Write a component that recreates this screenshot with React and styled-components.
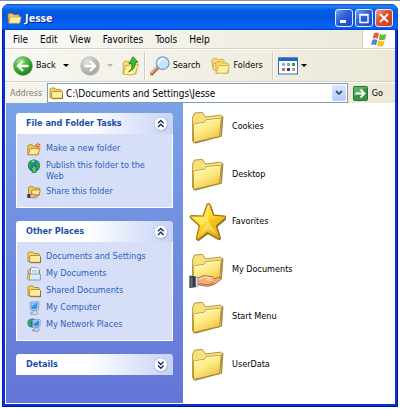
import React, { useState } from 'react'
import styled, { createGlobalStyle } from 'styled-components'

const GlobalStyle = createGlobalStyle`
  * {
    box-sizing: border-box;
  }

  body {
    margin: 0;
    background: #fff;
    font-family: 'DejaVu Sans Condensed', 'DejaVu Sans', sans-serif;
    font-stretch: condensed;
    font-size: 9px;
    line-height: 11px;
    color: #000;
  }

  button, input {
    margin: 0;
    padding: 0;
    border: 0;
    background: none;
    font: inherit;
    color: inherit;
  }

  svg {
    display: block;
    flex: none;
  }
`

const Desktop = styled.div`
  display: flex;
  min-height: 100vh;
  padding: 3px 2px 2px;
  border-top: 1px solid #8d8f9c;
`

const Window = styled.main`
  flex: 1;
  min-width: 0;
  display: flex;
  flex-direction: column;
  padding: 0 3px 3px;
  border-radius: 7px 7px 0 0;
  background: #0831d9;
  box-shadow: inset 1px 0 #0019cf, inset -1px -1px #00138c;
  overflow: hidden;
`

const TitleBar = styled.header`
  display: flex;
  align-items: center;
  height: 26px;
  margin: 0 -3px;
  padding: 2px 5px 0;
  background: linear-gradient(#0a4fc9, #2a83f5 8%, #0560e8 22%, #0453dd 50%, #0563f5 80%, #0560f0 92%, #003dd0);
`

const Title = styled.h1`
  flex: 1;
  margin: 0 0 0 3px;
  font-family: 'Open Sans', sans-serif;
  font-stretch: normal;
  font-size: 11px;
  line-height: 14px;
  color: #fff;
  text-shadow: 1px 1px #0a1883;
`

const TitleButtons = styled.div`
  display: flex;
  gap: 2px;
`

const TitleButton = styled.button`
  width: 18px;
  height: 18px;
  display: grid;
  place-items: center;
  border: 1px solid #dfe8fb;
  border-radius: 3px;
  background: ${props => props.$close
    ? 'linear-gradient(135deg, #f0a58c, #e0532c 40%, #c8381a)'
    : 'linear-gradient(135deg, #7ea4f2, #2f62dc 40%, #1b48c4)'};
`

const MenuBar = styled.nav`
  display: flex;
  align-items: stretch;
  height: 19px;
  padding-left: 8px;
  border-bottom: 1px solid #d8d2bd;
  background: linear-gradient(90deg, #f9f9f7, #ece9d8);
  font-size: 10px;
`

const MenuItems = styled.div`
  flex: 1;
  display: flex;
  align-items: center;
  gap: 12px;
`

const FlagBox = styled.div`
  width: 33px;
  display: grid;
  place-items: center;
  border-left: 1px solid #d8d2bd;
  background: #fff;
`

const ToolBar = styled.div`
  display: flex;
  align-items: center;
  height: 33px;
  padding-left: 8px;
  border-top: 1px solid #fff;
  border-bottom: 1px solid #d8d2bd;
  background: linear-gradient(90deg, #f7f6f1, #ece9d8);
`

const ToolButton = styled.button`
  display: flex;
  align-items: center;
  gap: 3px;
  margin-right: ${props => props.$after || 0}px;
`

const Caret = styled.span`
  margin-left: ${props => props.$wide ? 4 : 0}px;
  border: 3px solid transparent;
  border-top-color: ${props => props.$muted ? '#b5b2a6' : '#000'};
  border-bottom: 0;
`

const Divider = styled.span`
  width: 2px;
  height: 28px;
  margin-right: 4px;
  border-left: 1px solid #cfcab6;
  border-right: 1px solid #fff;
`

const AddressBar = styled.form`
  display: flex;
  align-items: center;
  height: 21px;
  padding: 0 12px 0 5px;
  border-top: 1px solid #fff;
  background: linear-gradient(90deg, #f5f4ee, #ece9d8);
`

const AddressLabel = styled.label`
  width: 37px;
  color: #7f7c73;
`

const AddressField = styled.div`
  flex: 1;
  min-width: 0;
  height: 20px;
  display: flex;
  align-items: center;
  gap: 3px;
  padding: 0 1px;
  border: 1px solid #7f9db9;
  background: #fff;
  font-size: 10px;
`

const AddressInput = styled.input`
  flex: 1;
  min-width: 0;
  outline: 0;
`

const DropButton = styled.button`
  width: 14px;
  height: 16px;
  display: grid;
  place-items: center;
  border-radius: 2px;
  background: linear-gradient(#dbe6fe, #b5cbf8);
`

const GoButton = styled.button`
  display: flex;
  align-items: center;
  gap: 4px;
  margin-left: 5px;
`

const Content = styled.div`
  flex: 1;
  display: flex;
  border-left: 1px solid #fff;
  border-bottom: 1px solid #fff;
  background: #fff;
`

const SideBar = styled.aside`
  width: 177px;
  display: flex;
  flex-direction: column;
  gap: 13px;
  padding: 10px 10px 20px;
  background: linear-gradient(#7ba2e7, #6375d6);
`

const PanelHeader = styled.button`
  width: 100%;
  height: 21px;
  display: flex;
  align-items: center;
  justify-content: space-between;
  padding: 0 4px 0 10px;
  border-radius: 3px 3px 0 0;
  background: linear-gradient(90deg, #fff 45%, #c6d3f7);
  font-weight: bold;
  color: #1c4ea8;
`

const PanelBody = styled.ul`
  display: flex;
  flex-direction: column;
  gap: 3px;
  margin: 0;
  padding: 8px 10px;
  border: 1px solid #fff;
  border-top: 0;
  background: #d6dff7;
  list-style: none;
`

const PanelLink = styled.a`
  display: grid;
  grid-template-columns: 14px 1fr;
  gap: 5px;
  color: #2a5fc0;
  text-decoration: none;
`

const LinkIcon = styled.span`
  height: 14px;
`

const LinkText = styled.span`
  padding-top: 1px;
`

const Files = styled.ul`
  flex: 1;
  display: grid;
  grid-template-rows: repeat(6, 1fr);
  margin: 0;
  padding: 0 0 15px 6px;
  list-style: none;
`

const File = styled.a`
  height: 100%;
  display: flex;
  align-items: center;
  gap: 6px;
  color: #000;
  text-decoration: none;
`

const SmallFolder = ({ size = 14 }) => (
  <svg width={size} height={size} viewBox="0 0 14 14">
    <path d="M1 11.5V3.2L2.2 2h3.6L7 3.5h4.6l.9 1v7z" fill="#f3d468" stroke="#b08a24" strokeWidth=".9" />
    <path d="M2.6 12.3V6.3L3.4 5.5h9.2l.9.8v6z" fill="#ffec9c" stroke="#b08a24" strokeWidth=".9" />
    <path d="M3.2 12.7H13.6V7" fill="none" stroke="#7c5e18" strokeWidth=".7" />
  </svg>
)

const TitleFolder = () => (
  <svg width="15" height="14" viewBox="0 0 15 14">
    <path d="M1.5 12 .8 3.4 2 2.4h3.6l1.2 1.3h4.8l.8 1V12z" fill="#e9c95c" stroke="#8e762c" strokeWidth=".8" />
    <path d="M2 12.2 3.3 6h10.9L12.6 12.2z" fill="#fff0a4" stroke="#c4a644" strokeWidth=".7" />
  </svg>
)

const NewFolder = () => (
  <svg width="14" height="14" viewBox="0 0 14 14">
    <path d="M.8 12.5V3.8L2 2.8h3l1.2 1.3h5V12.5z" fill="#eec75c" stroke="#a37c1c" strokeWidth=".8" />
    <path d="M1 12.8 3.4 6.6H13l-2.2 6.2z" fill="#ffeb98" stroke="#a37c1c" strokeWidth=".8" />
    <path d="m11 .2.8 1.9 2-.4-1.2 1.7 1.2 1.7-2-.3-.8 1.7-.8-1.7-2 .3 1.2-1.7-1.2-1.7 2 .4z" fill="#e8602c" />
    <circle cx="11" cy="3.3" r="1" fill="#ffd080" />
  </svg>
)

const Globe = () => (
  <svg width="14" height="14" viewBox="0 0 14 14">
    <circle cx="7" cy="6.6" r="6.2" fill="#2a78b8" />
    <path d="M1.2 5C2.4 1.8 5 .6 7.6.6L9 2 7.2 4.2 4 5.4l1 2.2L3.6 10Q.6 8 1.2 5zM8.4 4.6l2.6-2.4Q13.4 4.4 13 8l-2 2.8L9 9.6 10 7z" fill="#2ca04c" />
    <path d="M4.5 2.2Q6 1.1 8 1.8L6 3.6z" fill="#a2ecb0" />
    <path d="m7 6.6 3.6 4H9v3H5.2v-3H3.4z" fill="#55c45c" stroke="#146b33" strokeWidth=".7" />
  </svg>
)

const SharedFolder = () => (
  <svg width="14" height="14" viewBox="0 0 14 14">
    <path d="M1.5 10V2.6L2.6 1.6h3L6.8 3h5l.8.8V10z" fill="#f0cb5e" stroke="#a37c1c" strokeWidth=".8" />
    <path d="M3.8 10 5 5h8.2L12 10z" fill="#ffeb98" stroke="#a37c1c" strokeWidth=".8" />
    <path d="M3 9.5 6 8.8l2 1.4h3.7L9 12.7H3z" fill="#f3b78a" stroke="#9c4f26" strokeWidth=".6" />
    <path d="M.3 9h2.8v4H.3z" fill="#36425e" />
  </svg>
)

const DocsFolder = () => (
  <svg width="14" height="14" viewBox="0 0 14 14">
    <path d="M1 12.5V3.5L2 2.5h9l1.5 1v9z" fill="#f0cb5e" stroke="#a37c1c" strokeWidth=".8" />
    <path d="M4 .6h6l2 2V9H3z" fill="#f6fbff" stroke="#5a86b8" strokeWidth=".7" />
    <path d="M5 3.4h5M5 5h5.5" stroke="#7aa5d8" strokeWidth=".7" />
    <path d="M1.6 13 2.6 7h10.8v6z" fill="#d8ebf6" stroke="#6b8eac" strokeWidth=".8" />
    <path d="M1 13V7.5l1.5-1V13z" fill="#fbe07e" stroke="#a37c1c" strokeWidth=".5" />
  </svg>
)

const Computer = () => (
  <svg width="14" height="14" viewBox="0 0 14 14">
    <path d="m3 1.2 8.4-.7.8.8-.8 7.8-7 .6-1-.7z" fill="#b9cfe6" stroke="#7790b4" strokeWidth=".6" />
    <path d="m4.1 2.2 6.5-.6-.6 6.2-5.5.5z" fill="#2d93ee" />
    <path d="m4.3 2.4 5.3-.5-5 3.7z" fill="#8bd0ff" />
    <path d="m6.4 9.5 3-.2.3 1.7 1.3 1.2-2 1.4-5.3-.3-.5-1.2 3-1z" fill="#d9dfe9" stroke="#6d7896" strokeWidth=".6" />
  </svg>
)

const Network = () => (
  <svg width="14" height="14" viewBox="0 0 14 14">
    <circle cx="5" cy="5" r="4.6" fill="#2874b5" />
    <path d="M1 3.6Q3 .4 6 .7L5 3 3 4.4 4 7 2.6 8.4Q0 6 1 3.6z" fill="#2fae4e" />
    <path d="m5.4 2 7.4-.6.7.7-.6 6.7-6.3.6-.9-.7z" fill="#c4d6ea" stroke="#7088ae" strokeWidth=".6" />
    <path d="m6.3 3 6-.5-.5 5.2-5 .4z" fill="#2a8dea" />
    <path d="m6.5 3.1 4.7-.4-4.4 3z" fill="#93d4ff" />
    <path d="m8.5 9.4 2.5-.2.2 1.6 1.2 1.1-1.6 1.4-4.8-.2-.6-1.2 3-1z" fill="#cfd7e4" stroke="#59627f" strokeWidth=".6" />
  </svg>
)

const BigFolder = ({ shared }) => (
  <svg width="37" height="40" viewBox="0 -1 37 40">
    <defs>
      <linearGradient id="folderFront" x1="0" y1="0" x2=".6" y2="1">
        <stop offset="0" stopColor="#fffab8" />
        <stop offset=".5" stopColor="#ffec88" />
        <stop offset="1" stopColor="#efc340" />
      </linearGradient>
    </defs>
    <path d="m5 34.6 1 1.2 27-7.2 1.4-20-1.4-.4z" fill="#6f5419" opacity=".7" />
    <path d="M3.6 33V9.2l2-4.2 7.8-.6 2.6 3.9 1.2.6 14-1.8 1.8 1.3-1 20z" fill="#f7e07c" stroke="#b18c2c" strokeWidth=".9" />
    <path d="M4.6 34.6 4.2 17l1.2-1.3 9.6-1 2.4-3 13.8-1.2 1 1.1-1.5 16.2-1 .9z" fill="url(#folderFront)" stroke="#aa8424" strokeWidth=".9" />
    <path d="m5.6 16.4 9.8-1 2.4-3 13-1.1" fill="none" stroke="#fffde0" strokeWidth=".8" />
    {shared && (
      <g>
        <path d="m8 28.2 7-2.6 8.5 1.2 1.6 1.7 5.8-1.1 2 1.2-8 6.1-6 1.6L8 34.6z" fill="#f4ab70" stroke="#a44f23" strokeWidth=".8" />
        <path d="m9 29.4 7-2.5 6.2 1.1-5 1.8 6.4.7" fill="none" stroke="#ffdfb8" strokeWidth="1.1" />
        <path d="m10 33.6 9 1.2 6-2" fill="none" stroke="#c96a34" />
        <path d="M6.2 26.6 9 27.4V36l-2.8.6z" fill="#d5dce8" stroke="#697183" strokeWidth=".5" />
        <path d="m.4 25.5 6.2 1v10.8L.4 38z" fill="#353945" />
        <path d="m1.6 27 2 .3v9.4l-2 .2z" fill="#686e7e" />
      </g>
    )}
  </svg>
)

const Star = () => (
  <svg width="37" height="40" viewBox="0 0 37 40">
    <defs>
      <linearGradient id="starFill" x1="0" y1="0" x2=".8" y2="1">
        <stop offset="0" stopColor="#fff27a" />
        <stop offset=".5" stopColor="#ffd928" />
        <stop offset="1" stopColor="#dc9d0a" />
      </linearGradient>
    </defs>
    <path d="M18.3 2.2q1.5-1.5 2.6.4l3.7 10.6 11 .9q1.9.8.7 2.2l-9 7.5 3.6 11.5q0 2-2 1.4l-10.5-6-9.2 6.8q-2 .4-1.8-1.5l3-12.3-9-8.2q-.8-1.6 1.4-1.8l11.2.3z" transform="translate(.7 1)" fill="#5f4812" stroke="#5f4812" opacity=".7" />
    <path d="M18.3 2.2q1.5-1.5 2.6.4l3.7 10.6 11 .9q1.9.8.7 2.2l-9 7.5 3.6 11.5q0 2-2 1.4l-10.5-6-9.2 6.8q-2 .4-1.8-1.5l3-12.3-9-8.2q-.8-1.6 1.4-1.8l11.2.3z" fill="url(#starFill)" stroke="#a57508" strokeWidth="1.2" />
    <path d="m19.3 5-3.6 10.5L4 15l9 8 6-4zM19 19l10 14-10-6-8 6z" fill="#fff9a8" opacity=".4" />
    <path d="m19 19 14.6-3.4-8 7L29 34z" fill="#f1b315" opacity=".45" />
  </svg>
)

const Round = ({ muted }) => (
  <svg width="20" height="20" viewBox="0 0 20 20">
    <defs>
      <radialGradient id={muted ? 'roundGrey' : 'roundGreen'} cx=".35" cy=".25" r=".8">
        <stop offset="0" stopColor={muted ? '#e4e4e0' : '#a4e68c'} />
        <stop offset=".5" stopColor={muted ? '#bdbdba' : '#45b53a'} />
        <stop offset="1" stopColor={muted ? '#a3a3a1' : '#187a17'} />
      </radialGradient>
    </defs>
    <circle cx="10" cy="10" r="9.3" fill={muted ? 'url(#roundGrey)' : 'url(#roundGreen)'} stroke={muted ? '#b3b3ad' : '#3d8f34'} strokeWidth=".7" />
    <path d={muted ? 'M4.5 10h10M10 5l5 5-5 5' : 'M15.5 10h-10M10 5l-5 5 5 5'} fill="none" stroke="#fff" strokeWidth="2.3" />
  </svg>
)

const UpFolder = () => (
  <svg width="17" height="20" viewBox="0 0 17 20">
    <path d="m1 17.5.4-11L2.8 5l4 .3 1 2 6.2.3V18z" fill="#f6dd72" stroke="#bd9a32" strokeWidth=".8" />
    <path d="m1 18 3-8.4L16.3 8l-3 9.6-4 1.4z" fill="#fff1a2" stroke="#bd9a32" strokeWidth=".8" />
    <path d="M6.5 15.8q4.2-2 3.3-8.6l-2.9.4L11 .8l5 5.3-2.8.5q.6 6.7-6.7 9.2z" fill="#3dbb36" stroke="#18791b" strokeWidth=".8" />
  </svg>
)

const SearchIcon = () => (
  <svg width="20" height="20" viewBox="0 0 20 20">
    <path d="m1.8 17.8 6.4-6.6" stroke="#b06a38" strokeWidth="3.4" strokeLinecap="round" />
    <path d="m1.6 17 6-6.2" stroke="#e8b184" strokeWidth="1.3" strokeLinecap="round" />
    <circle cx="12.7" cy="7.2" r="6.3" fill="#c4e4fb" stroke="#7e9dce" strokeWidth="1.3" />
    <path d="M8.5 7.5q0-4 4.4-4.6" fill="none" stroke="#fff" strokeWidth="2" strokeLinecap="round" />
  </svg>
)

const FoldersIcon = () => (
  <svg width="19" height="17" viewBox="0 0 19 17">
    <path d="m2.5 12.6-2-9L1.7 2l3.6-.7L7 2.8l5-.5 1 1.3V12z" fill="#f7dd72" stroke="#caa63e" strokeWidth=".8" />
    <path d="M2.4 13V6.4h9.4l1 5.6z" fill="#fff0a0" stroke="#caa63e" strokeWidth=".8" />
    <path d="M5 15.8 4.7 6l1.2-1.2H10L11.5 6h5l.8 1v9z" fill="#f7dd72" stroke="#caa63e" strokeWidth=".8" />
    <path d="m5 16.2 2.6-7.6h10.8l-2.2 7.6z" fill="#fff0a0" stroke="#caa63e" strokeWidth=".8" />
  </svg>
)

const ViewsIcon = () => (
  <svg width="20" height="18" viewBox="0 0 20 18">
    <rect x=".5" y="1" width="19" height="16" fill="#fff" stroke="#2873bc" />
    <path d="M.5.5h19V4H.5z" fill="#1f69c1" />
    <path d="M4 6h3v3H4z" fill="#91b2d8" />
    <path d="M9 6h3v3H9z" fill="#889cd4" />
    <path d="M14 6h3v3h-3z" fill="#3a9b45" />
    <path d="M4 11h3v3H4z" fill="#de7048" />
    <path d="M9 11h3v3H9z" fill="#1b478e" />
    <path d="M14 11h3v3h-3z" fill="#c8a25a" />
  </svg>
)

const Flag = () => (
  <svg width="17" height="15" viewBox="0 0 17 15">
    <path d="M3 1.4Q5.5-.2 8 1.4L6.7 6.8Q4 5.4 1.6 6.9z" fill="#e8622c" />
    <path d="M9 1.8q2.6 1.6 6.5.2L14 7.4Q11 8.8 7.8 7.2z" fill="#6cb83e" />
    <path d="M1.3 8Q4 6.4 6.5 8L5 13.2Q2.6 11.8 0 13z" fill="#4a86d8" />
    <path d="M7.5 8.3q3 1.7 6.3.2L12.3 14q-3 1.2-6.3-.4z" fill="#f5bd28" />
  </svg>
)

const GoIcon = () => (
  <svg width="15" height="15" viewBox="0 0 15 15">
    <rect x=".5" y=".5" width="14" height="14" rx="1" fill="#359540" stroke="#267331" />
    <path d="M1 1h13L1 11z" fill="#7ccb7f" opacity=".5" />
    <path d="M2.5 7.5h9M7.5 3.5l4 4-4 4" fill="none" stroke="#fff" strokeWidth="1.8" />
  </svg>
)

const Chevrons = ({ open }) => (
  <svg width="16" height="16" viewBox="0 0 16 16">
    <circle cx="8.3" cy="8.5" r="7" fill="#8998c4" opacity=".5" />
    <circle cx="7.8" cy="7.8" r="6.6" fill="#fff" stroke="#b5c0de" strokeWidth=".7" />
    <path
      d={open ? 'M5 7.3 7.8 4.5l2.8 2.8M5 11 7.8 8.2l2.8 2.8' : 'M5 4.7l2.8 2.8 2.8-2.8M5 8.4l2.8 2.8 2.8-2.8'}
      fill="none"
      stroke="#1b2d5e"
      strokeWidth="1.4"
    />
  </svg>
)

const menus = ['File', 'Edit', 'View', 'Favorites', 'Tools', 'Help']

const tasks = [
  { text: 'Make a new folder', icon: <NewFolder /> },
  { text: 'Publish this folder to the Web', icon: <Globe /> },
  { text: 'Share this folder', icon: <SharedFolder /> }
]

const places = [
  { text: 'Documents and Settings', icon: <SmallFolder /> },
  { text: 'My Documents', icon: <DocsFolder /> },
  { text: 'Shared Documents', icon: <SmallFolder /> },
  { text: 'My Computer', icon: <Computer /> },
  { text: 'My Network Places', icon: <Network /> }
]

const files = [
  { name: 'Cookies', icon: <BigFolder /> },
  { name: 'Desktop', icon: <BigFolder /> },
  { name: 'Favorites', icon: <Star /> },
  { name: 'My Documents', icon: <BigFolder shared /> },
  { name: 'Start Menu', icon: <BigFolder /> },
  { name: 'UserData', icon: <BigFolder /> }
]

const Panel = ({ title, items = [], defaultOpen = false }) => {
  const [open, setOpen] = useState(defaultOpen)

  return (
    <section>
      <PanelHeader type="button" aria-expanded={open} onClick={() => setOpen(!open)}>
        {title}
        <Chevrons open={open} />
      </PanelHeader>
      {open && (
        <PanelBody>
          {items.map(item => (
            <li key={item.text}>
              <PanelLink href="#">
                <LinkIcon>{item.icon}</LinkIcon>
                <LinkText>{item.text}</LinkText>
              </PanelLink>
            </li>
          ))}
        </PanelBody>
      )}
    </section>
  )
}

const App = () => {
  const [address, setAddress] = useState('C:\\Documents and Settings\\Jesse')

  return (
    <Desktop>
      <GlobalStyle />
      <Window>
        <TitleBar>
          <TitleFolder />
          <Title>Jesse</Title>
          <TitleButtons>
            <TitleButton aria-label="Minimize">
              <svg width="12" height="12"><path d="M2 8h6v3H2z" fill="#fff" /></svg>
            </TitleButton>
            <TitleButton aria-label="Maximize">
              <svg width="12" height="12"><path d="M2 2.5h8v8H2zM2 3h8" fill="none" stroke="#fff" strokeWidth="1.4" /></svg>
            </TitleButton>
            <TitleButton $close aria-label="Close">
              <svg width="12" height="12"><path d="m2 2 8 8M10 2l-8 8" stroke="#fff" strokeWidth="1.9" /></svg>
            </TitleButton>
          </TitleButtons>
        </TitleBar>
        <MenuBar>
          <MenuItems>
            {menus.map(menu => <button key={menu} type="button">{menu}</button>)}
          </MenuItems>
          <FlagBox><Flag /></FlagBox>
        </MenuBar>
        <ToolBar>
          <ToolButton $after={11}>
            <Round />
            Back
            <Caret $wide />
          </ToolButton>
          <ToolButton aria-label="Forward" $after={9}>
            <Round muted />
            <Caret $wide $muted />
          </ToolButton>
          <ToolButton aria-label="Up" $after={5}><UpFolder /></ToolButton>
          <Divider />
          <ToolButton $after={11}>
            <SearchIcon />
            Search
          </ToolButton>
          <ToolButton $after={9}>
            <FoldersIcon />
            Folders
          </ToolButton>
          <Divider />
          <ToolButton aria-label="Views">
            <ViewsIcon />
            <Caret />
          </ToolButton>
        </ToolBar>
        <AddressBar onSubmit={e => e.preventDefault()}>
          <AddressLabel htmlFor="address">Address</AddressLabel>
          <AddressField>
            <SmallFolder />
            <AddressInput id="address" value={address} onChange={e => setAddress(e.target.value)} />
            <DropButton type="button" aria-label="Show addresses">
              <svg width="8" height="6"><path d="m1 1 3 3 3-3" fill="none" stroke="#3c5584" strokeWidth="1.8" /></svg>
            </DropButton>
          </AddressField>
          <GoButton type="submit">
            <GoIcon />
            Go
          </GoButton>
        </AddressBar>
        <Content>
          <SideBar>
            <Panel title="File and Folder Tasks" items={tasks} defaultOpen />
            <Panel title="Other Places" items={places} defaultOpen />
            <Panel title="Details" />
          </SideBar>
          <Files>
            {files.map(file => (
              <li key={file.name}>
                <File href="#">
                  {file.icon}
                  {file.name}
                </File>
              </li>
            ))}
          </Files>
        </Content>
      </Window>
    </Desktop>
  )
}

export default App
